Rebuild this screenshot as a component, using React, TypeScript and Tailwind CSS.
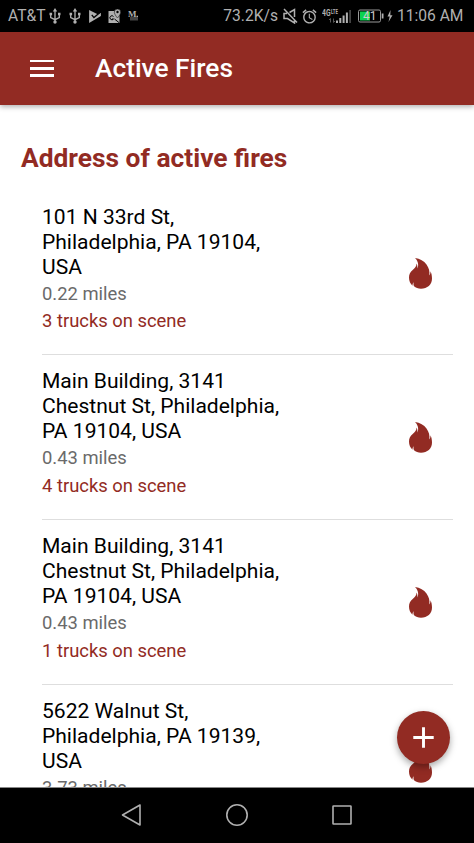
import { ReactNode } from "react";
import { MdAccessAlarm, MdAdd } from "react-icons/md";

interface Fire {
  id: number;
  address: string[];
  distance: string;
  trucks?: number;
}

const fires: Fire[] = [
  {
    id: 1,
    address: ["101 N 33rd St,", "Philadelphia, PA 19104,", "USA"],
    distance: "0.22 miles",
    trucks: 3,
  },
  {
    id: 2,
    address: ["Main Building, 3141", "Chestnut St, Philadelphia,", "PA 19104, USA"],
    distance: "0.43 miles",
    trucks: 4,
  },
  {
    id: 3,
    address: ["Main Building, 3141", "Chestnut St, Philadelphia,", "PA 19104, USA"],
    distance: "0.43 miles",
    trucks: 1,
  },
  {
    id: 4,
    address: ["5622 Walnut St,", "Philadelphia, PA 19139,", "USA"],
    distance: "3.73 miles",
  },
];

function FlameIcon() {
  return (
    <svg width="23" height="31" viewBox="0 0 23 31" fill="#922b23">
      <path d="M6 0C11 .5 15 3 17.500 6.500 20 10 20.900 13.500 20.300 17.500c.9-1.200 1.200-2.500 1.200-4.300C22.600 15.500 23 18 23 20.500c0 6.200-4.700 10.200-11 10.200-2.800 0-5.300-.9-7-2.400-.6-1.200-.7-2.500-.3-4-1 1.200-1.300 2.200-1.200 3.500C1.300 25.800 0 22.800 0 19.500c0-3.500 1.300-5.700 3.700-7.600C6 10 7.600 8.300 7.500 5.500c1 1.700 1.100 3.200.5 5C10 8.500 9.500 3.500 6 0Z" />
    </svg>
  );
}

function UsbIcon() {
  return (
    <svg width="12" height="16" viewBox="0 0 12 16" fill="none" stroke="currentColor" strokeWidth="1.300">
      <path d="M6 2v12M1.700 6v3.500L6 11.700l4.300-2.200V6" />
      <path d="M6 0 3.800 3.500h4.400ZM.5 4.800h2.600v2.400H.5zM9 4.800h2.500v2.400H9z" fill="currentColor" stroke="none" />
      <circle cx="6" cy="14" r="1.700" fill="currentColor" stroke="none" />
    </svg>
  );
}

function MuteIcon() {
  return (
    <svg width="15" height="16" viewBox="0 0 15 16" fill="none" stroke="currentColor" strokeWidth="1.500">
      <path d="M4 5.500H1v5h3.500L11.500 15v-3M6.500 4.500l5-3V9M1 1l13 13.500" />
    </svg>
  );
}

function SignalIcon() {
  return (
    <svg width="30" height="17" viewBox="0 0 30 17" fill="currentColor">
      <text x="0" y="7.500" fontSize="9" fontWeight="700" textLength="8.500" lengthAdjust="spacingAndGlyphs">4G</text>
      <text x="9" y="6" fontSize="7.500" fontWeight="700" textLength="7" lengthAdjust="spacingAndGlyphs">LTE</text>
      <path d="M8.500 10.500v4M7 12l1.500-1.500M11.500 10.500v4L13 13" stroke="#555" fill="none" />
      <path d="M14 12.500h2V15h-2zM17.300 10h2v5h-2zM20.600 7.500h2V15h-2zM23.900 4.500h2V15h-2z" />
      <path d="M27.200 2h1.800v13h-1.800z" fill="#444" />
    </svg>
  );
}

function StatusBar() {
  return (
    <div className="flex h-[31.500px] shrink-0 items-center justify-between bg-black pt-px pr-[10.500px] pl-2 text-[15.600px] text-[#b0b0b0]">
      <div className="flex items-center">
        <span className="w-[37px] whitespace-nowrap">AT&amp;T</span>
        <span className="ml-[4px]"><UsbIcon /></span>
        <span className="ml-[8px]"><UsbIcon /></span>
        <svg className="ml-[7px]" width="14" height="15" viewBox="0 0 13 14" fill="currentColor">
          <path d="M1 1v12l11-6.500V3.500L9 5Z" />
          <path d="m3.500 5.500 2 2.500L12 2.500" stroke="#000" strokeWidth="1.300" fill="none" />
        </svg>
        <svg className="ml-[5px]" width="15" height="16" viewBox="0 0 14 16" fill="currentColor">
          <path d="M1 3h6l1 3 2 3 2-2v8H1Z" />
          <path d="M10 1a3.200 3.200 0 0 0-3.200 3.200C6.800 6.500 10 10 10 10s3.200-3.500 3.200-5.800A3.200 3.200 0 0 0 10 1Z" stroke="#000" strokeWidth=".5" />
          <circle cx="10" cy="4" r="1.200" fill="#000" />
          <path d="M6 8.500A2 2 0 1 0 6 11H4.500M7 11l5 4" stroke="#000" fill="none" />
        </svg>
        <svg className="ml-[6px]" width="11" height="12" viewBox="0 0 11 12" fill="currentColor">
          <path d="M2 7h8v3.500H2z" fill="#444" />
          <text x="0" y="7" fontSize="9" fontWeight="700" fontFamily="Liberation Serif, serif">M</text>
          <path d="M8.500 5.800H10V7H8.500z" />
        </svg>
      </div>
      <div className="flex items-center">
        <span className="whitespace-nowrap">73.2K/s</span>
        <span className="ml-[5px]"><MuteIcon /></span>
        <MdAccessAlarm className="ml-[3px] size-[17px]" />
        <span className="ml-[4px]"><SignalIcon /></span>
        <svg className="ml-[6px]" width="35" height="14" viewBox="0 0 35 14">
          <rect x=".5" y="1" width="22" height="12" rx="1.500" fill="none" stroke="#999" />
          <path d="M2 2.500h10v9H2z" fill="#0bd34f" />
          <text x="5" y="11.300" fontSize="12" fill="#ccc">41</text>
          <path d="M23.700 4.500h1.800v5h-1.800z" fill="#b0b0b0" />
          <path d="M32.500 1 29.500 7.500h2.200L30.500 13 34.500 6.300h-2.200Z" fill="#b0b0b0" />
        </svg>
        <span className="ml-[4px] whitespace-nowrap">11:06 AM</span>
      </div>
    </div>
  );
}

function Header() {
  return (
    <header className="z-10 flex h-[73.500px] shrink-0 items-center bg-[#922b23] pl-[30px] text-white shadow-[0_2px_5px_rgba(0,0,0,0.3)]">
      <button aria-label="Menu" className="flex h-[17px] w-6 flex-col justify-between">
        <span className="h-[2.700px] w-full bg-white" />
        <span className="h-[2.700px] w-full bg-white" />
        <span className="h-[2.700px] w-full bg-white" />
      </button>
      <h1 className="ml-[41px] text-[26.300px] leading-8 font-medium">Active Fires</h1>
    </header>
  );
}

function FireItem({ fire }: { fire: Fire }) {
  return (
    <li className="flex h-[164.700px] items-start justify-between border-b border-[#dedede] pt-[12.900px] pr-[21px]">
      <div>
        <p className="text-[21.050px] leading-[25px] text-black">
          {fire.address.map((line) => (
            <span key={line} className="block whitespace-nowrap">{line}</span>
          ))}
        </p>
        <p className="mt-px text-[18.400px] leading-[27.500px] text-[#6a6a6a]">{fire.distance}</p>
        {fire.trucks && (
          <p className="text-[18.400px] leading-[27.800px] text-[#922b23]">{fire.trucks} trucks on scene</p>
        )}
      </div>
      <div className="mt-[54.100px]">
        <FlameIcon />
      </div>
    </li>
  );
}

function NavButton({ label, children }: { label: string; children: ReactNode }) {
  return (
    <button aria-label={label}>
      <svg width="24" height="24" viewBox="0 0 24 24" fill="none" stroke="#b0b0b0" strokeWidth="1.600" strokeLinejoin="round">
        {children}
      </svg>
    </button>
  );
}

export default function App() {
  return (
    <div className="flex h-screen flex-col overflow-hidden bg-white font-['Roboto',sans-serif]">
      <StatusBar />
      <Header />

      <main className="relative min-h-0 flex-1 overflow-hidden pl-[21px]">
        <h2 className="mt-[37px] text-[26.350px] leading-8 font-bold text-[#922b23]">
          Address of active fires
        </h2>
        <ul className="mt-[16.800px] mr-[21px] ml-[21px]">
          {fires.map((fire) => (
            <FireItem key={fire.id} fire={fire} />
          ))}
        </ul>
        <button
          aria-label="Add fire"
          className="absolute right-[23.600px] bottom-[23px] flex size-[53px] items-center justify-center rounded-full bg-[#922b23] text-white shadow-[0_3px_7px_rgba(0,0,0,0.35)]"
        >
          <MdAdd className="size-[35px]" />
        </button>
      </main>

      <nav className="flex h-[56px] shrink-0 items-center justify-center gap-[81px] border-t border-[#888] bg-black pb-px">
        <NavButton label="Back">
          <path d="M20 2v20L2.500 12Z" />
        </NavButton>
        <NavButton label="Home">
          <circle cx="12" cy="12" r="10.200" />
        </NavButton>
        <NavButton label="Recent apps">
          <rect x="3" y="3" width="18" height="18" rx=".5" />
        </NavButton>
      </nav>
    </div>
  );
}
